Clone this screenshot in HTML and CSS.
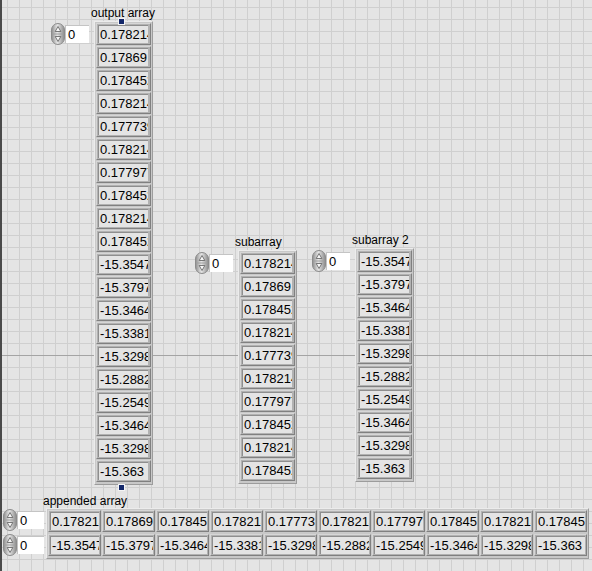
FILE: index.html
```html
<!DOCTYPE html>
<html>
<head>
<meta charset="utf-8">
<link rel="stylesheet" href="styles.css">
</head>
<body>
<div class="panel">
  <div class="hline"></div>

  <section class="ctl c-output">
    <div class="index">
      <svg class="spin" width="14" height="22" viewBox="0 0 14 22"><defs><linearGradient id="sg" x1="0" x2="1"><stop offset="0" stop-color="#8e8e8e"/><stop offset=".45" stop-color="#e6e6e6"/><stop offset="1" stop-color="#8a8a8a"/></linearGradient></defs><rect x="0.5" y="0.5" width="13" height="21" rx="6.5" fill="url(#sg)" stroke="#8c8c8c"/><line x1="1.5" y1="11" x2="12.5" y2="11" stroke="#a0a0a0"/><path d="M7 3.5 L9.8 8.5 H4.2 Z" fill="#f6f6f6" stroke="#5a5a5a" stroke-width=".8"/><path d="M7 18.5 L9.8 13.5 H4.2 Z" fill="#f6f6f6" stroke="#5a5a5a" stroke-width=".8"/></svg>
      <div class="idx-box">0</div>
    </div>
    <div class="arr">
      <div class="label">output array</div>
      <div class="frame v handles">
        <div class="cell"><span>0.178214</span></div>
        <div class="cell"><span>0.17869</span></div>
        <div class="cell"><span>0.178452</span></div>
        <div class="cell"><span>0.178214</span></div>
        <div class="cell"><span>0.177739</span></div>
        <div class="cell"><span>0.178214</span></div>
        <div class="cell"><span>0.177977</span></div>
        <div class="cell"><span>0.178452</span></div>
        <div class="cell"><span>0.178214</span></div>
        <div class="cell"><span>0.178452</span></div>
        <div class="cell"><span>-15.3547</span></div>
        <div class="cell"><span>-15.3797</span></div>
        <div class="cell"><span>-15.3464</span></div>
        <div class="cell"><span>-15.3381</span></div>
        <div class="cell"><span>-15.3298</span></div>
        <div class="cell"><span>-15.2882</span></div>
        <div class="cell"><span>-15.2549</span></div>
        <div class="cell"><span>-15.3464</span></div>
        <div class="cell"><span>-15.3298</span></div>
        <div class="cell"><span>-15.363</span></div>
      </div>
    </div>
  </section>

  <section class="ctl c-sub">
    <div class="index">
      <svg class="spin" width="14" height="22" viewBox="0 0 14 22"><rect x="0.5" y="0.5" width="13" height="21" rx="6.5" fill="url(#sg)" stroke="#8c8c8c"/><line x1="1.5" y1="11" x2="12.5" y2="11" stroke="#a0a0a0"/><path d="M7 3.5 L9.8 8.5 H4.2 Z" fill="#f6f6f6" stroke="#5a5a5a" stroke-width=".8"/><path d="M7 18.5 L9.8 13.5 H4.2 Z" fill="#f6f6f6" stroke="#5a5a5a" stroke-width=".8"/></svg>
      <div class="idx-box">0</div>
    </div>
    <div class="arr">
      <div class="label">subarray</div>
      <div class="frame v">
        <div class="cell"><span>0.178214</span></div>
        <div class="cell"><span>0.17869</span></div>
        <div class="cell"><span>0.178452</span></div>
        <div class="cell"><span>0.178214</span></div>
        <div class="cell"><span>0.177739</span></div>
        <div class="cell"><span>0.178214</span></div>
        <div class="cell"><span>0.177977</span></div>
        <div class="cell"><span>0.178452</span></div>
        <div class="cell"><span>0.178214</span></div>
        <div class="cell"><span>0.178452</span></div>
      </div>
    </div>
  </section>

  <section class="ctl c-sub2">
    <div class="index">
      <svg class="spin" width="14" height="22" viewBox="0 0 14 22"><rect x="0.5" y="0.5" width="13" height="21" rx="6.5" fill="url(#sg)" stroke="#8c8c8c"/><line x1="1.5" y1="11" x2="12.5" y2="11" stroke="#a0a0a0"/><path d="M7 3.5 L9.8 8.5 H4.2 Z" fill="#f6f6f6" stroke="#5a5a5a" stroke-width=".8"/><path d="M7 18.5 L9.8 13.5 H4.2 Z" fill="#f6f6f6" stroke="#5a5a5a" stroke-width=".8"/></svg>
      <div class="idx-box">0</div>
    </div>
    <div class="arr">
      <div class="label">subarray 2</div>
      <div class="frame v">
        <div class="cell"><span>-15.3547</span></div>
        <div class="cell"><span>-15.3797</span></div>
        <div class="cell"><span>-15.3464</span></div>
        <div class="cell"><span>-15.3381</span></div>
        <div class="cell"><span>-15.3298</span></div>
        <div class="cell"><span>-15.2882</span></div>
        <div class="cell"><span>-15.2549</span></div>
        <div class="cell"><span>-15.3464</span></div>
        <div class="cell"><span>-15.3298</span></div>
        <div class="cell"><span>-15.363</span></div>
      </div>
    </div>
  </section>

  <section class="ctl c-append">
    <div class="index-col">
      <div class="index">
        <svg class="spin" width="14" height="22" viewBox="0 0 14 22"><rect x="0.5" y="0.5" width="13" height="21" rx="6.5" fill="url(#sg)" stroke="#8c8c8c"/><line x1="1.5" y1="11" x2="12.5" y2="11" stroke="#a0a0a0"/><path d="M7 3.5 L9.8 8.5 H4.2 Z" fill="#f6f6f6" stroke="#5a5a5a" stroke-width=".8"/><path d="M7 18.5 L9.8 13.5 H4.2 Z" fill="#f6f6f6" stroke="#5a5a5a" stroke-width=".8"/></svg>
        <div class="idx-box">0</div>
      </div>
      <div class="index">
        <svg class="spin" width="14" height="22" viewBox="0 0 14 22"><rect x="0.5" y="0.5" width="13" height="21" rx="6.5" fill="url(#sg)" stroke="#8c8c8c"/><line x1="1.5" y1="11" x2="12.5" y2="11" stroke="#a0a0a0"/><path d="M7 3.5 L9.8 8.5 H4.2 Z" fill="#f6f6f6" stroke="#5a5a5a" stroke-width=".8"/><path d="M7 18.5 L9.8 13.5 H4.2 Z" fill="#f6f6f6" stroke="#5a5a5a" stroke-width=".8"/></svg>
        <div class="idx-box">0</div>
      </div>
    </div>
    <div class="arr">
      <div class="label">appended array</div>
      <div class="frame grid2d">
        <div class="cell"><span>0.178214</span></div>
        <div class="cell"><span>0.17869</span></div>
        <div class="cell"><span>0.178452</span></div>
        <div class="cell"><span>0.178214</span></div>
        <div class="cell"><span>0.177739</span></div>
        <div class="cell"><span>0.178214</span></div>
        <div class="cell"><span>0.177977</span></div>
        <div class="cell"><span>0.178452</span></div>
        <div class="cell"><span>0.178214</span></div>
        <div class="cell"><span>0.178452</span></div>
        <div class="cell"><span>-15.3547</span></div>
        <div class="cell"><span>-15.3797</span></div>
        <div class="cell"><span>-15.3464</span></div>
        <div class="cell"><span>-15.3381</span></div>
        <div class="cell"><span>-15.3298</span></div>
        <div class="cell"><span>-15.2882</span></div>
        <div class="cell"><span>-15.2549</span></div>
        <div class="cell"><span>-15.3464</span></div>
        <div class="cell"><span>-15.3298</span></div>
        <div class="cell"><span>-15.363</span></div>
      </div>
    </div>
  </section>
</div>
</body>
</html>
```

FILE: styles.css
```css
html, body {
  margin: 0;
  padding: 0;
}

body {
  font-family: "Liberation Sans", Arial, sans-serif;
  color: #000;
}

.panel {
  position: relative;
  width: 592px;
  height: 571px;
  overflow: hidden;
  box-sizing: border-box;
  border-left: 2px solid #4a4a4a;
  background-color: #e4e4e4;
  background-image:
    linear-gradient(to right, #cfcfcf 1px, transparent 1px),
    linear-gradient(to bottom, #cfcfcf 1px, transparent 1px);
  background-size: 12px 12px;
  background-position: 5px 7px;
}

.hline {
  position: absolute;
  left: 0;
  right: 0;
  top: 355px;
  height: 1px;
  background: #a4a4a4;
}

/* free-canvas controls */
.ctl {
  position: absolute;
  display: flex;
  align-items: flex-start;
}

.c-output { left: 49px; top: 6px; }
.c-sub { left: 193px; top: 235px; }
.c-sub2 { left: 310px; top: 233px; }
.c-append { left: 1px; top: 494px; }

.arr {
  display: flex;
  flex-direction: column;
  margin-left: 5px;
}

.label {
  font-size: 12px;
  line-height: 15px;
  height: 15px;
  margin-left: -3px;
  white-space: nowrap;
}

/* index control */
.index {
  display: flex;
  align-items: center;
  margin-top: 17px;
}

.spin {
  display: block;
  flex: none;
}

.idx-box {
  width: 24px;
  height: 18px;
  box-sizing: border-box;
  background: #fff;
  border-top: 1px solid #c4c4c4;
  border-left: 1px solid #c4c4c4;
  font-size: 13px;
  line-height: 17px;
  padding-left: 2px;
}

.index-col {
  display: flex;
  flex-direction: column;
  gap: 3px;
  margin-top: 15px;
}

.index-col .index {
  margin-top: 0;
}

.index-col .idx-box {
  width: 27px;
}

.c-append .arr {
  margin-left: 2px;
}

.c-append .label {
  line-height: 14px;
  height: 14px;
}

/* array frame */
.frame {
  position: relative;
  box-sizing: border-box;
  background: #c8c8c8;
  border-top: 1px solid #ececec;
  border-left: 1px solid #ececec;
  border-right: 1px solid #9c9c9c;
  border-bottom: 1px solid #9c9c9c;
  padding: 1px 1px 2px 1px;
}

.frame.v {
  display: flex;
  flex-direction: column;
  gap: 1px;
  width: 59px;
}

.frame.grid2d {
  display: grid;
  grid-template-columns: repeat(10, 53px);
  column-gap: 1px;
  row-gap: 2px;
  padding: 1px 1px 2px 1px;
}

.handles::before,
.handles::after {
  content: "";
  position: absolute;
  left: 23px;
  width: 5px;
  height: 5px;
  background: #14286a;
  border: 1px solid #f4f4f4;
}

.handles::before { top: -4px; }
.handles::after { bottom: -7px; }

/* numeric cell */
.cell {
  box-sizing: border-box;
  height: 22px;
  width: 55px;
  background: #b2b2b2;
  border-top: 1px solid #d6d6d6;
  border-left: 1px solid #d6d6d6;
  border-right: 1px solid #808080;
  border-bottom: 1px solid #808080;
  padding: 1px 2px 1px 1px;
}

.grid2d .cell {
  width: 53px;
  padding-right: 1px;
}

.cell span {
  display: block;
  height: 100%;
  box-sizing: border-box;
  overflow: hidden;
  white-space: nowrap;
  background: #e4e4e4;
  border-top: 1px solid #8e8e8e;
  border-left: 1px solid #8e8e8e;
  font-size: 13px;
  line-height: 17px;
  padding-left: 1px;
}
```
